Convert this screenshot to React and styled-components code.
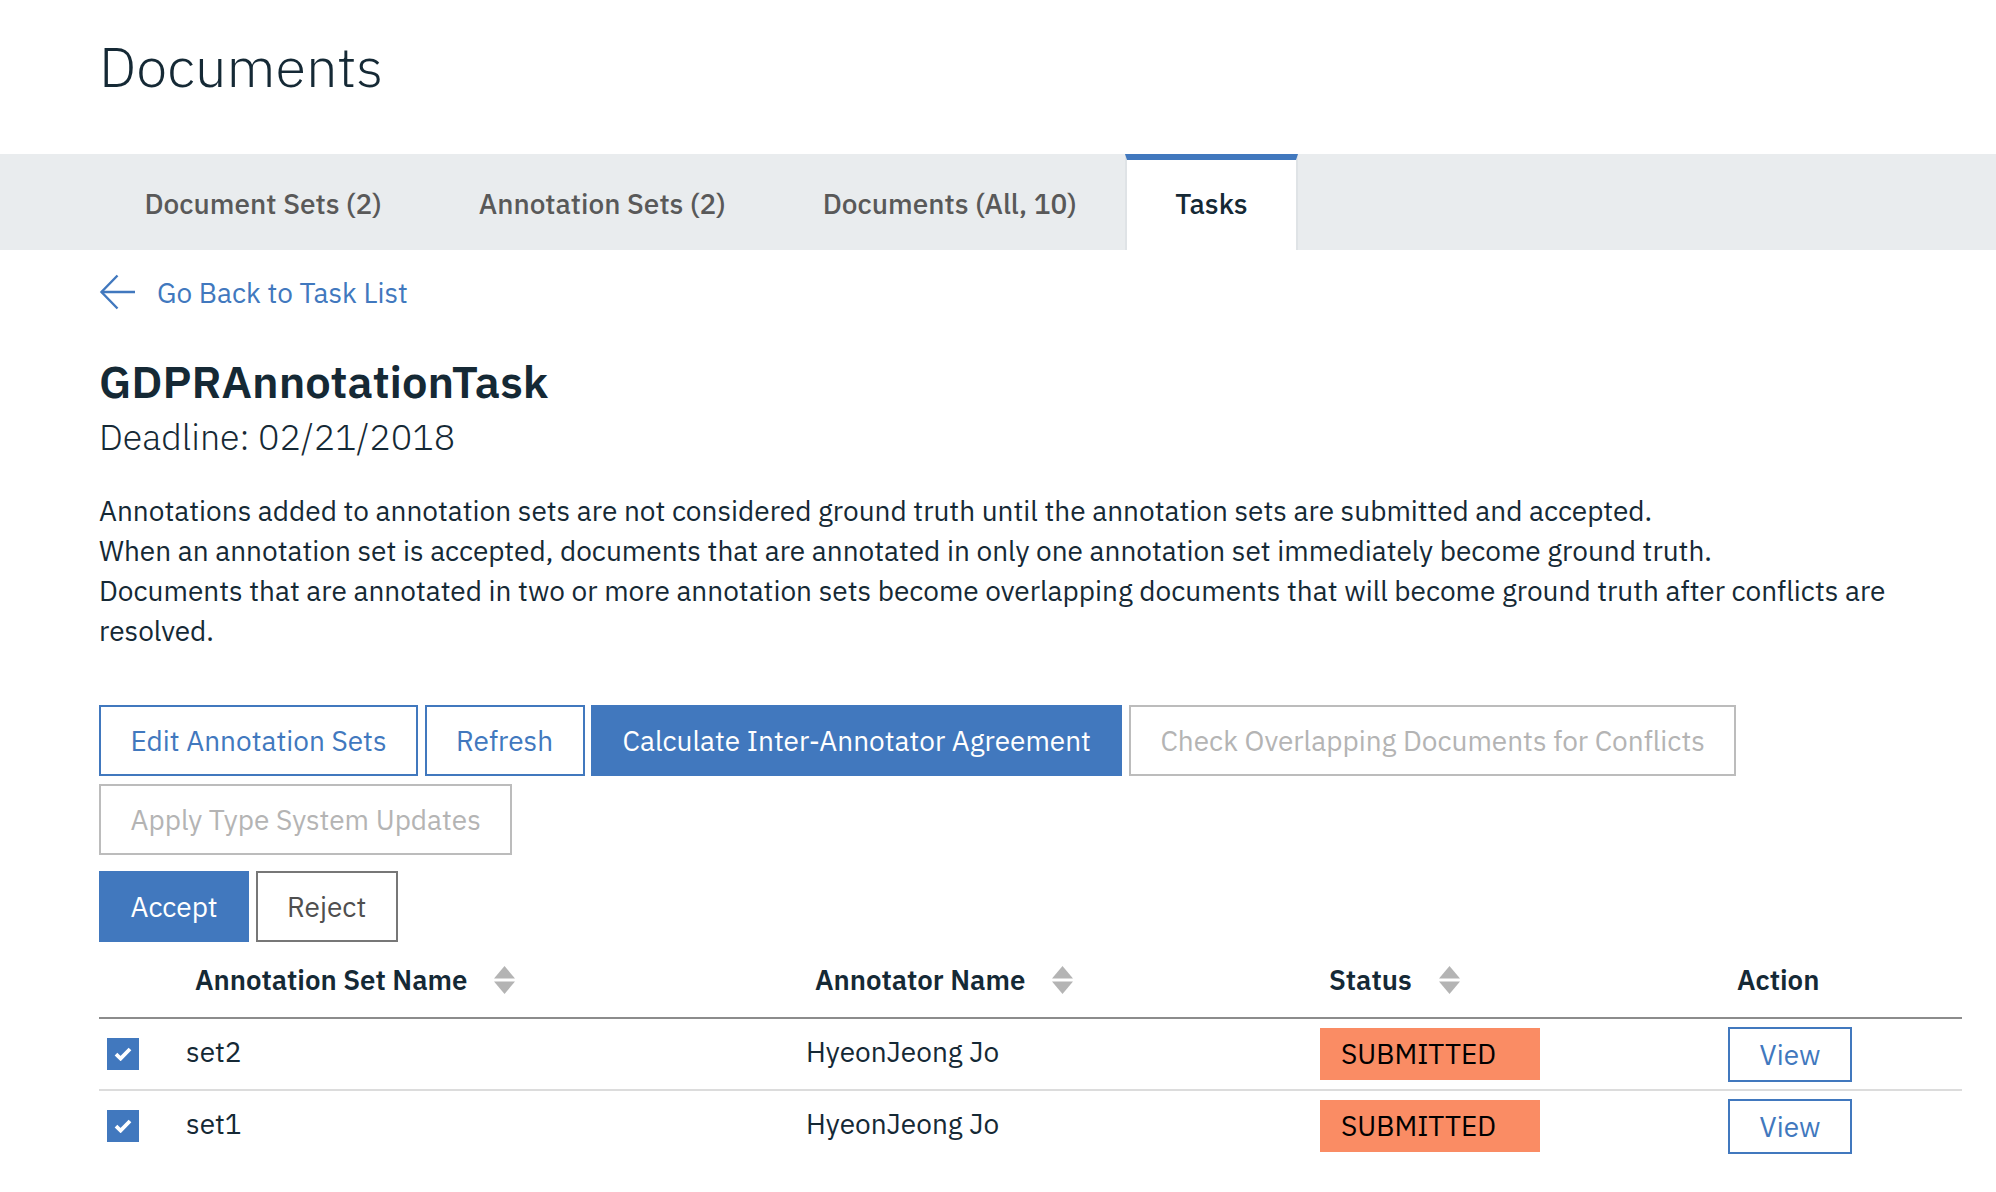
import React from 'react';
import styled, { createGlobalStyle } from 'styled-components';

const BLUE = '#4178be';
const TEXT = '#152935';

const GlobalStyle = createGlobalStyle`
  * { box-sizing: border-box; }
  body {
    margin: 0;
    background: #fff;
    color: ${TEXT};
    font-family: 'IBM Plex Sans', 'Open Sans', 'Liberation Sans', sans-serif;
  }
`;

const PageHeader = styled.header`
  height: 154px;
  padding: 38px 0 0 99px;
`;

const PageTitle = styled.h1`
  margin: 0;
  font-size: 56px;
  font-weight: 300;
  line-height: 1;
  color: ${TEXT};
`;

const TabBar = styled.nav`
  display: flex;
  height: 96px;
  padding-left: 96px;
  background: #e9ecee;
`;

const Tab = styled.div`
  display: flex;
  align-items: center;
  padding: 0 ${p => (p.$active ? 48 : 46.5)}px 4px;
  font-size: 28px;
  font-weight: 500;
  color: ${p => (p.$active ? TEXT : '#595959')};
  background: ${p => (p.$active ? '#fff' : 'transparent')};
  border-top: 6px solid ${p => (p.$active ? BLUE : 'transparent')};
  border-left: 2px solid ${p => (p.$active ? '#dfe3e6' : 'transparent')};
  border-right: 2px solid ${p => (p.$active ? '#dfe3e6' : 'transparent')};
  cursor: pointer;
`;

const Main = styled.main`
  padding: 0 34px 40px 99px;
`;

const BackLink = styled.a`
  display: flex;
  align-items: center;
  gap: 21px;
  margin-top: 24px;
  height: 36px;
  font-size: 28px;
  color: ${BLUE};
  text-decoration: none;
  cursor: pointer;
`;

const TaskTitle = styled.h2`
  margin: 43px 0 0;
  font-size: 45.3px;
  line-height: 56px;
  font-weight: 600;
`;

const Deadline = styled.div`
  margin-top: 6px;
  font-size: 35.8px;
  line-height: 44px;
  font-weight: 300;
`;

const Description = styled.p`
  margin: 32px 0 0;
  font-size: 28px;
  line-height: 40px;
`;

const ButtonGroup = styled.div`
  display: flex;
  flex-wrap: wrap;
  gap: 8px 6.5px;
  margin-top: ${p => p.$top}px;
`;

const Button = styled.button`
  height: 71px;
  padding: 0 29.5px;
  font-family: inherit;
  font-size: 28px;
  background: ${p => (p.$kind === 'primary' ? BLUE : '#fff')};
  color: ${p =>
    p.$kind === 'primary' ? '#fff' : p.$kind === 'disabled' ? '#b4b4b4' : p.$kind === 'plain' ? '#4f4f4f' : BLUE};
  border: 2px solid
    ${p => (p.$kind === 'primary' || p.$kind === 'secondary' ? BLUE : p.$kind === 'disabled' ? '#bcbcbc' : '#777')};
  cursor: ${p => (p.$kind === 'disabled' ? 'default' : 'pointer')};
`;

const Table = styled.table`
  width: 100%;
  border-collapse: collapse;
  table-layout: fixed;
`;

const HeadCell = styled.th`
  height: 76px;
  padding: 0 0 0 ${p => (p.$first ? 0 : 34)}px;
  text-align: left;
  font-size: 27.6px;
  font-weight: 600;
  color: ${TEXT};
  border-bottom: 2px solid #8c8c8c;
`;

const HeadInner = styled.span`
  display: inline-flex;
  align-items: center;
  gap: 27px;
`;

const Row = styled.tr`
  border-bottom: 2px solid ${p => (p.$last ? 'transparent' : '#dcdcdc')};
`;

const Cell = styled.td`
  height: 72px;
  padding: 0 0 ${p => (p.$text ? 6 : 0)}px ${p => p.$pad ?? 25}px;
  font-size: 28px;
  color: ${TEXT};
  vertical-align: middle;
`;

const CheckBox = styled.span`
  display: flex;
  align-items: center;
  justify-content: center;
  width: 32px;
  height: 32px;
  background: ${BLUE};
`;

const StatusBadge = styled.span`
  display: inline-block;
  width: 220px;
  height: 52px;
  padding-left: 21px;
  line-height: 52px;
  background: #fa8c64;
  color: #000;
  font-size: 28px;
`;

const ViewButton = styled.button`
  width: 124px;
  height: 55px;
  font-family: inherit;
  font-size: 28px;
  color: ${BLUE};
  background: #fff;
  border: 2px solid ${BLUE};
  cursor: pointer;
`;

const ArrowLeft = () => (
  <svg width="37" height="36" viewBox="0 0 37 36" fill="none" stroke={BLUE} strokeWidth="2.4">
    <path d="M36 18H2.5" />
    <path d="M18.5 1.5L2.5 18l16 16.5" />
  </svg>
);

const SortIcon = () => (
  <svg width="21" height="28" viewBox="0 0 21 28" fill="#b4b4b4">
    <polygon points="10.5,0 21,12.5 0,12.5" />
    <polygon points="0,15.5 21,15.5 10.5,28" />
  </svg>
);

const Check = () => (
  <svg width="18" height="14" viewBox="0 0 18 14" fill="none" stroke="#fff" strokeWidth="3.8">
    <path d="M2 7.2l4.6 4.4L16 2" />
  </svg>
);

const tabs = ['Document Sets (2)', 'Annotation Sets (2)', 'Documents (All, 10)', 'Tasks'];

const rows = [
  { name: 'set2', annotator: 'HyeonJeong Jo', status: 'SUBMITTED' },
  { name: 'set1', annotator: 'HyeonJeong Jo', status: 'SUBMITTED' },
];

export default function App() {
  return (
    <>
      <GlobalStyle />
      <PageHeader>
        <PageTitle>Documents</PageTitle>
      </PageHeader>
      <TabBar>
        {tabs.map(t => (
          <Tab key={t} $active={t === 'Tasks'}>
            {t}
          </Tab>
        ))}
      </TabBar>
      <Main>
        <BackLink>
          <ArrowLeft />
          Go Back to Task List
        </BackLink>
        <TaskTitle>GDPRAnnotationTask</TaskTitle>
        <Deadline>Deadline: 02/21/2018</Deadline>
        <Description>
          Annotations added to annotation sets are not considered ground truth until the annotation sets are submitted
          and accepted.
          <br />
          When an annotation set is accepted, documents that are annotated in only one annotation set immediately become
          ground truth.
          <br />
          Documents that are annotated in two or more annotation sets become overlapping documents that will become
          ground truth after conflicts are resolved.
        </Description>
        <ButtonGroup $top={54}>
          <Button $kind="secondary">Edit Annotation Sets</Button>
          <Button $kind="secondary">Refresh</Button>
          <Button $kind="primary">Calculate Inter-Annotator Agreement</Button>
          <Button $kind="disabled">Check Overlapping Documents for Conflicts</Button>
          <Button $kind="disabled">Apply Type System Updates</Button>
        </ButtonGroup>
        <ButtonGroup $top={16}>
          <Button $kind="primary">Accept</Button>
          <Button $kind="plain">Reject</Button>
        </ButtonGroup>
        <Table>
          <colgroup>
            <col style={{ width: 62 }} />
            <col style={{ width: 620 }} />
            <col style={{ width: 514 }} />
            <col style={{ width: 408 }} />
            <col />
          </colgroup>
          <thead>
            <tr>
              <HeadCell $first />
              <HeadCell>
                <HeadInner>
                  Annotation Set Name
                  <SortIcon />
                </HeadInner>
              </HeadCell>
              <HeadCell>
                <HeadInner>
                  Annotator Name
                  <SortIcon />
                </HeadInner>
              </HeadCell>
              <HeadCell>
                <HeadInner>
                  Status
                  <SortIcon />
                </HeadInner>
              </HeadCell>
              <HeadCell>Action</HeadCell>
            </tr>
          </thead>
          <tbody>
            {rows.map((r, i) => (
              <Row key={r.name} $last={i === rows.length - 1}>
                <Cell $pad={8}>
                  <CheckBox>
                    <Check />
                  </CheckBox>
                </Cell>
                <Cell $text>{r.name}</Cell>
                <Cell $text>{r.annotator}</Cell>
                <Cell>
                  <StatusBadge>{r.status}</StatusBadge>
                </Cell>
                <Cell>
                  <ViewButton>View</ViewButton>
                </Cell>
              </Row>
            ))}
          </tbody>
        </Table>
      </Main>
    </>
  );
}
